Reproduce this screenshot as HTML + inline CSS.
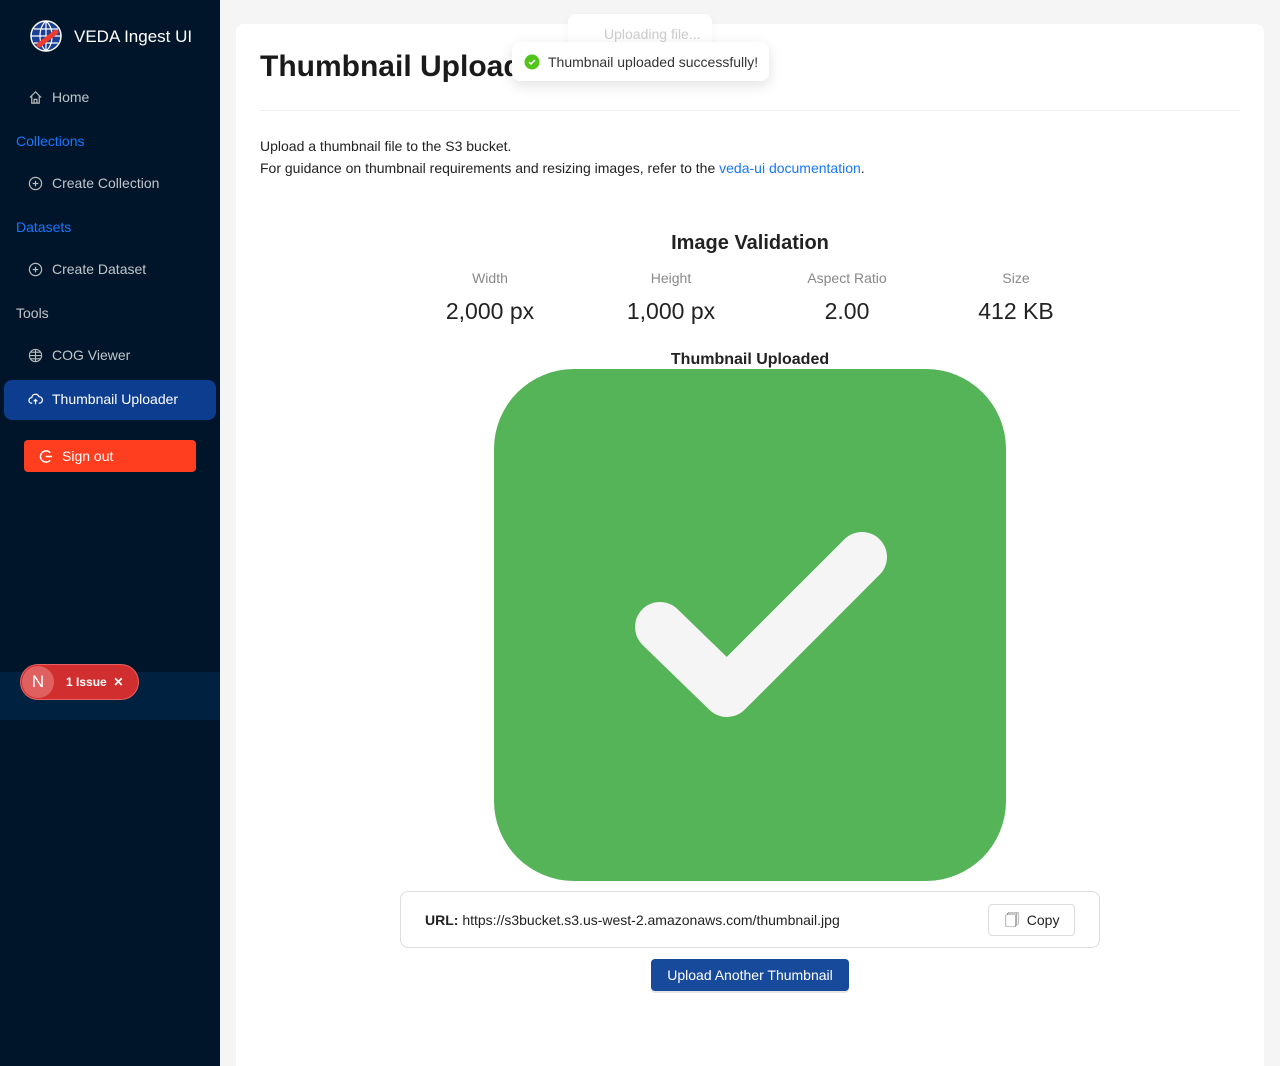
<!DOCTYPE html>
<html><head><meta charset="utf-8"><style>
*{box-sizing:border-box;margin:0;padding:0}
html,body{width:1280px;height:1066px;overflow:hidden}
body{background:#f5f5f5;font-family:"Liberation Sans",sans-serif;position:relative}
.sb{position:absolute;left:0;top:0;width:220px;height:1066px;background:#001529}
.logo{position:absolute;left:30px;top:20px}
.brand{position:absolute;left:74px;top:27px;color:#fff;font-size:17px}
.it{position:absolute;left:28px;color:rgba(255,255,255,.75);font-size:14px;display:flex;align-items:center;gap:9px}
.grp{position:absolute;left:16px;font-size:14px}
.act{position:absolute;left:4px;top:380px;width:212px;height:40px;background:#0d3d8f;border-radius:8px}
.so{position:absolute;left:24px;top:440px;width:172px;height:32px;background:#ff3e1f;border-radius:4px;color:#fff;font-size:14px;display:flex;align-items:center;padding-left:15px;gap:8px}
.band{position:absolute;left:0;top:672px;width:220px;height:48px;background:#002140}
.pill{position:absolute;left:20px;top:664px;width:119px;height:36px;background:#d12f2f;border-radius:18px;border:1px solid #e86060}
.pill .n{position:absolute;left:1px;top:1px;width:32px;height:32px;border-radius:50%;background:#e06060;color:#fff;font-size:17px;text-align:center;line-height:32px}
.pill .t{position:absolute;left:45px;top:10px;color:#fff;font-size:12px;font-weight:bold}
.card{position:absolute;left:236px;top:24px;width:1028px;height:1042px;background:#fff;border-radius:8px 8px 0 0}
h1{position:absolute;left:260px;top:50px;font-size:30px;font-weight:bold;color:#1a1a1a}
.hr{position:absolute;left:260px;top:110px;width:980px;height:1px;background:#eee}
.p{position:absolute;left:260px;font-size:14px;color:#222}
.toast{position:absolute;background:#fff;border-radius:8px;box-shadow:0 4px 14px rgba(0,0,0,.12);font-size:14px;display:flex;align-items:center}
.stat{position:absolute;text-align:center;width:180px}
.stat .l{font-size:14px;color:#888}
.stat .v{font-size:23px;color:#222;margin-top:12px}
.url{position:absolute;left:400px;top:891px;width:700px;height:57px;border:1px solid #ddd;border-radius:8px}
.btn{position:absolute;left:651px;top:959px;width:198px;height:32px;background:#184a9b;border-radius:4px;color:#fff;font-size:14px;text-align:center;line-height:32px;box-shadow:0 2px 0 rgba(0,0,0,.1)}
</style></head><body>
<div class="sb">
<svg class="logo" width="32" height="32" viewBox="0 0 32 32"><circle cx="16" cy="16" r="15" fill="#1a3f95" stroke="#fff" stroke-width="1.5"/><path d="M1 16h30M16 1v30M4 9h24M4 23h24M16 1c-8 7-8 23 0 30M16 1c8 7 8 23 0 30" stroke="#fff" stroke-width="1.2" fill="none"/><path d="M9 25l17-13" stroke="#ef3b2c" stroke-width="5" stroke-linecap="round"/></svg>
<div class="brand">VEDA Ingest UI</div>
<div class="it" style="top:89px"><svg width="15" height="15" viewBox="0 0 16 16" fill="none" stroke="#bbb" stroke-width="1.3"><path d="M2 8l6-6 6 6M4 6.5V14h8V6.5M6.5 14v-4h3v4"/></svg>Home</div>
<div class="grp" style="top:133px;color:#1677ff">Collections</div>
<div class="it" style="top:175px"><svg width="15" height="15" viewBox="0 0 16 16" fill="none" stroke="#bbb" stroke-width="1.3"><circle cx="8" cy="8" r="6.5"/><path d="M8 5v6M5 8h6"/></svg>Create Collection</div>
<div class="grp" style="top:219px;color:#1677ff">Datasets</div>
<div class="it" style="top:261px"><svg width="15" height="15" viewBox="0 0 16 16" fill="none" stroke="#bbb" stroke-width="1.3"><circle cx="8" cy="8" r="6.5"/><path d="M8 5v6M5 8h6"/></svg>Create Dataset</div>
<div class="grp" style="top:305px;color:rgba(255,255,255,.75)">Tools</div>
<div class="it" style="top:347px"><svg width="15" height="15" viewBox="0 0 16 16" fill="none" stroke="#bbb" stroke-width="1.2"><circle cx="8" cy="8" r="6.5"/><path d="M1.5 8h13M8 1.5v13M3 4.5h10M3 11.5h10"/></svg>COG Viewer</div>
<div class="act"></div>
<div class="it" style="top:391px;color:#fff"><svg width="15" height="15" viewBox="0 0 16 16" fill="none" stroke="#fff" stroke-width="1.3"><path d="M4.5 12H4a3 3 0 010-6 4 4 0 017.7-1A3 3 0 0112 12h-.5M8 13V8M6 10l2-2 2 2"/></svg>Thumbnail Uploader</div>
<div class="so"><svg width="15" height="15" viewBox="0 0 16 16" fill="none" stroke="#fff" stroke-width="1.5"><path d="M12 4a6 6 0 100 8M7 8h7"/></svg>Sign out</div>
<div class="band"></div>
<div class="pill"><div class="n">N</div><div class="t">1 Issue &nbsp;✕</div></div>
</div>
<div class="card"></div>
<div class="toast" style="left:568px;top:14px;width:144px;height:40px;color:#ccc;padding-left:36px;box-shadow:0 2px 10px rgba(0,0,0,.04)">Uploading file...</div>
<h1>Thumbnail Upload</h1>
<div class="toast" style="left:512px;top:42px;width:257px;height:39px;padding-left:12px;color:#333"><svg width="16" height="16" style="margin-right:8px"><circle cx="8" cy="8" r="7.5" fill="#52c41a"/><path d="M5 8l2 2 4-4" stroke="#fff" stroke-width="1.5" fill="none"/></svg>Thumbnail uploaded successfully!</div>
<div class="hr"></div>
<div class="p" style="top:138px">Upload a thumbnail file to the S3 bucket.</div>
<div class="p" style="top:160px">For guidance on thumbnail requirements and resizing images, refer to the <span style="color:#1677ff">veda-ui documentation</span>.</div>
<div style="position:absolute;left:0;width:1500px;top:232px;text-align:center;font-size:20px;font-weight:bold;color:#222">Image Validation</div>
<div class="stat" style="left:400px;top:270px"><div class="l">Width</div><div class="v">2,000 px</div></div>
<div class="stat" style="left:581px;top:270px"><div class="l">Height</div><div class="v">1,000 px</div></div>
<div class="stat" style="left:757px;top:270px"><div class="l">Aspect Ratio</div><div class="v">2.00</div></div>
<div class="stat" style="left:926px;top:270px"><div class="l">Size</div><div class="v">412 KB</div></div>
<div style="position:absolute;left:0;width:1500px;top:351px;text-align:center;font-size:16px;font-weight:bold;color:#222">Thumbnail Uploaded</div>
<svg style="position:absolute;left:494px;top:369px" width="512" height="512"><rect width="512" height="512" rx="80" fill="#55b358"/><path d="M166 258L233 323L368 188" stroke="#f5f5f5" stroke-width="50" stroke-linecap="round" stroke-linejoin="round" fill="none"/></svg>
<div class="url"><div style="position:absolute;left:24px;top:20px;font-size:14px;color:#222"><b>URL:</b> https://s3bucket.s3.us-west-2.amazonaws.com/thumbnail.jpg</div>
<div style="position:absolute;left:587px;top:12px;width:87px;height:32px;border:1px solid #ddd;border-radius:4px;font-size:14px;color:#222;line-height:30px;padding-left:16px">🗍&nbsp; Copy</div></div>
<div class="btn">Upload Another Thumbnail</div>
</body></html>
